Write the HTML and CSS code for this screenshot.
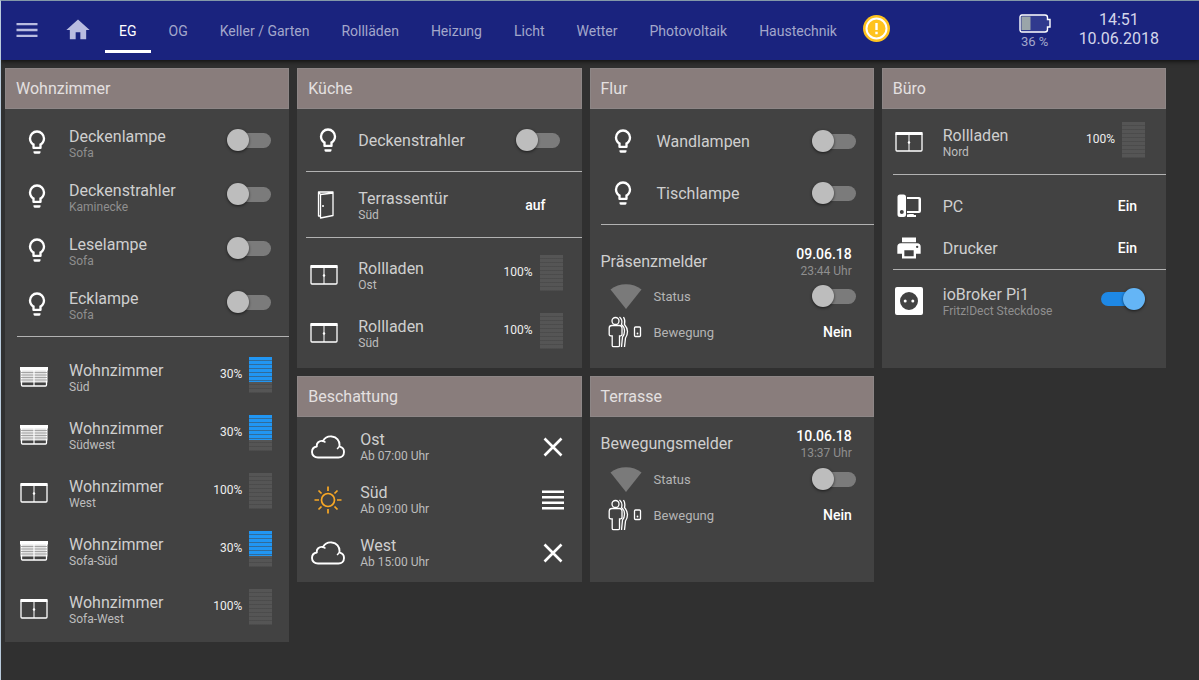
FILE: index.html
```html
<!DOCTYPE html>
<html lang="de">
<head>
  <meta charset="UTF-8">
  <meta name="viewport" content="width=device-width, initial-scale=1">
  <title>Haussteuerung - EG</title>
  <link rel="stylesheet" href="styles.css">
</head>
<body>
  <!-- Icons -->
  <svg class="sprite" aria-hidden="true">
    <symbol id="i-menu" viewBox="0 0 24 24"><path d="M3,6H21V8H3V6M3,11H21V13H3V11M3,16H21V18H3V16Z"/></symbol>
    <symbol id="i-home" viewBox="0 0 24 24"><path d="M10,20V14H14V20H19V12H22L12,3L2,12H5V20H10Z"/></symbol>
    <symbol id="i-bulb" viewBox="0 0 24 24"><path d="M12,2A7,7 0 0,1 19,9C19,11.38 17.81,13.47 16,14.74V17A1,1 0 0,1 15,18H9A1,1 0 0,1 8,17V14.74C6.19,13.47 5,11.38 5,9A7,7 0 0,1 12,2M9,21V20H15V21A1,1 0 0,1 14,22H10A1,1 0 0,1 9,21M12,4A5,5 0 0,0 7,9C7,11.05 8.23,12.81 10,13.58V16H14V13.58C15.77,12.81 17,11.05 17,9A5,5 0 0,0 12,4Z"/></symbol>
    <symbol id="i-printer" viewBox="0 0 24 24"><path d="M18,3H6V7H18M19,12A1,1 0 0,1 18,11A1,1 0 0,1 19,10A1,1 0 0,1 20,11A1,1 0 0,1 19,12M16,19H8V14H16M19,8H5A3,3 0 0,0 2,11V17H6V21H18V17H22V11A3,3 0 0,0 19,8Z"/></symbol>
    <symbol id="i-pc" viewBox="0 0 28 28">
      <path fill-rule="evenodd" d="M5 2.500H8.500A2.500 2.500 0 0 1 11 5V22.500A2.500 2.500 0 0 1 8.500 25H5A2.500 2.500 0 0 1 2.500 22.500V5A2.500 2.500 0 0 1 5 2.500ZM6.800 18A2 2 0 1 0 6.800 22A2 2 0 1 0 6.800 18Z"/>
      <path fill-rule="evenodd" d="M12 5H24A2 2 0 0 1 26 7V19A2 2 0 0 1 24 21H12V19H23.500V7H12Z"/>
      <path d="M12 22.500L15 22H18.500L19 23H21V25H12Z"/>
    </symbol>
    <symbol id="i-socket" viewBox="0 0 28 28"><path fill-rule="evenodd" d="M2 0H26A2 2 0 0 1 28 2V26A2 2 0 0 1 26 28H2A2 2 0 0 1 0 26V2A2 2 0 0 1 2 0ZM14 5A9 9 0 1 0 14 23A9 9 0 1 0 14 5Z"/><circle cx="10.200" cy="14" r="1.500"/><circle cx="17.800" cy="14" r="1.500"/></symbol>
    <symbol id="i-window" viewBox="0 0 28 20">
      <rect x="1" y="1" width="26" height="18" rx="1" fill="none" stroke="currentColor" stroke-width="1.300"/>
      <path d="M.500 0H27.500V3H.500ZM13.500 3H14.500V19H13.500Z"/><circle cx="14" cy="10.500" r="1.200"/>
    </symbol>
    <symbol id="i-shutter" viewBox="0 0 28 20">
      <rect x="1.500" y="1" width="25" height="18" rx="1" fill="none" stroke="currentColor" stroke-width="1.300"/>
      <path opacity=".85" d="M.500 3H27.500V15.500H.500Z"/>
      <path d="M0 0H28V3.500H0Z"/>
      <path fill="none" stroke="#777" stroke-width=".600" d="M1 5.500H27M1 8H27M1 10.500H27M1 13H27"/>
      <path d="M13.400 3H14.600V19H13.400Z"/>
    </symbol>
    <symbol id="i-door" viewBox="0 0 18 28">
      <path fill="none" stroke="currentColor" stroke-width="1.300" stroke-linejoin="round" d="M3.500 25H1.500V1H16V2M1.500 1L3.500 3.500V27L16 24.500V2L3.500 3.500M5 15H7"/>
    </symbol>
    <symbol id="i-cloud" viewBox="0 0 34 24">
      <path fill="none" stroke="currentColor" stroke-width="1.900" stroke-linejoin="round" d="M7 22.500C3.500 22.500 1 20.300 1 17C1 14 3 12 5.800 11.500C5.300 8.300 8 5.300 12 6C14 2.600 17.500 1 21 1.500C25.500 2 28.800 5.500 28.500 10.500C28.300 11.300 28.500 11.500 29 11.700C31.700 12.500 33 14.500 33 17C33 20.300 30.600 22.500 27.500 22.500Z"/>
      <path fill="none" stroke="currentColor" stroke-width="1.500" d="M11 6.200C12.600 6.100 13.500 6.600 14.500 7.400M28 11.500C27.500 12.500 27 13.300 26 14"/>
    </symbol>
    <symbol id="i-sun" viewBox="0 0 28 28">
      <g fill="none" stroke="currentColor" stroke-width="1.700">
        <circle cx="14" cy="14" r="6.500"/>
        <path d="M14 .500V5M14 23V27.500M.500 14H5M23 14H27.500M4.500 4.500L7.500 7.500M20.500 20.500L23.500 23.500M4.500 23.500L7.500 20.500M20.500 7.500L23.500 4.500"/>
      </g>
    </symbol>
    <symbol id="i-close" viewBox="0 0 24 24"><path fill="none" stroke="currentColor" stroke-width="2.600" d="M3.500 3.500L20.500 20.500M20.500 3.500L3.500 20.500"/></symbol>
    <symbol id="i-lines" viewBox="0 0 24 24"><path d="M1 2.500H23V5H1ZM1 8H23V10.500H1ZM1 13.500H23V16H1ZM1 19H23V21.500H1Z"/></symbol>
    <symbol id="i-signal" viewBox="0 0 32 25"><path d="M.500 5.500C9-1.500 23-1.500 31.500 5.500L16 25Z"/></symbol>
    <symbol id="i-motion" viewBox="0 0 34 32">
      <g fill="none" stroke="currentColor" stroke-width="1.300">
        <circle cx="7.500" cy="5" r="3.500"/>
        <path d="M4 9.500H11.500Q14 9.500 14 12V18.500Q14 20 11.500 20V29.500Q11.500 30.700 10 30.700H5.500Q4.200 30.700 4.200 29.500V20Q1.200 20 1.200 18.500V12Q1.200 9.500 4 9.500Z"/>
        <path d="M11.500 1Q15 4 13.500 8.500Q16.500 11 16.500 15Q16.500 19 14.500 21L13.500 31M15.500 1Q17.500 4 16.500 8.500Q19.500 12 19.500 15.500Q19.500 19 17.500 22L16.500 31"/>
        <rect x="26.500" y="11" width="6" height="9.500" rx="1"/>
      </g>
      <circle cx="29.500" cy="17.500" r=".9"/>
    </symbol>
  </svg>

  <header class="topbar">
    <button class="icon-btn" type="button" aria-label="Menü"><svg class="icon"><use href="#i-menu"/></svg></button>
    <a class="icon-btn" href="#home" aria-label="Start"><svg class="icon"><use href="#i-home"/></svg></a>
    <nav class="tabs">
      <a class="active" href="#eg">EG</a>
      <a href="#og">OG</a>
      <a href="#keller">Keller / Garten</a>
      <a href="#rolllaeden">Rollläden</a>
      <a href="#heizung">Heizung</a>
      <a href="#licht">Licht</a>
      <a href="#wetter">Wetter</a>
      <a href="#pv">Photovoltaik</a>
      <a href="#haustechnik">Haustechnik</a>
    </nav>
    <svg class="alert" viewBox="0 0 27 27" role="img" aria-label="Warnung">
      <circle cx="13.500" cy="13.500" r="13.500" fill="#ffc31f"/>
      <circle cx="13.500" cy="13.500" r="10" fill="none" stroke="#fff" stroke-width="2"/>
      <path fill="#fff" d="M12.300 8H14.700V15H12.300ZM12.300 16.800H14.700V19.200H12.300Z"/>
    </svg>
    <div class="battery">
      <svg width="32" height="19" viewBox="0 0 32 19">
        <path fill="#303a8e" stroke="#fff" stroke-width="1.400" d="M3 1H26Q28.500 1 28.500 3.500V5.500H31V13H28.500V15.500Q28.500 18 26 18H3Q1 18 1 15.500V3.500Q1 1 3 1Z"/>
        <path fill="#9aa5a9" d="M2.500 2.500H11.500V16H2.500Z"/>
      </svg>
      <span>36 %</span>
    </div>
    <div class="clock">
      <div>14:51</div>
      <div>10.06.2018</div>
    </div>
  </header>

  <main class="board">
    <div class="col">
      <section class="card">
        <h2>Wohnzimmer</h2>
        <div class="group lamps">
          <div class="row two">
            <svg class="icon"><use href="#i-bulb"/></svg>
            <label class="text" for="l1">Deckenlampe<small>Sofa</small></label>
            <input class="switch" type="checkbox" id="l1">
          </div>
          <div class="row two">
            <svg class="icon"><use href="#i-bulb"/></svg>
            <label class="text" for="l2">Deckenstrahler<small>Kaminecke</small></label>
            <input class="switch" type="checkbox" id="l2">
          </div>
          <div class="row two">
            <svg class="icon"><use href="#i-bulb"/></svg>
            <label class="text" for="l3">Leselampe<small>Sofa</small></label>
            <input class="switch" type="checkbox" id="l3">
          </div>
          <div class="row two">
            <svg class="icon"><use href="#i-bulb"/></svg>
            <label class="text" for="l4">Ecklampe<small>Sofa</small></label>
            <input class="switch" type="checkbox" id="l4">
          </div>
        </div>
        <hr>
        <div class="group blinds main">
          <div class="row">
            <svg class="icon win"><use href="#i-shutter"/></svg>
            <div class="text">Wohnzimmer<small>Süd</small></div>
            <div class="blind">30%<div class="bar"><i style="height:70%"></i></div></div>
          </div>
          <div class="row">
            <svg class="icon win"><use href="#i-shutter"/></svg>
            <div class="text">Wohnzimmer<small>Südwest</small></div>
            <div class="blind">30%<div class="bar"><i style="height:70%"></i></div></div>
          </div>
          <div class="row">
            <svg class="icon win"><use href="#i-window"/></svg>
            <div class="text">Wohnzimmer<small>West</small></div>
            <div class="blind">100%<div class="bar"></div></div>
          </div>
          <div class="row">
            <svg class="icon win"><use href="#i-shutter"/></svg>
            <div class="text">Wohnzimmer<small>Sofa-Süd</small></div>
            <div class="blind">30%<div class="bar"><i style="height:70%"></i></div></div>
          </div>
          <div class="row">
            <svg class="icon win"><use href="#i-window"/></svg>
            <div class="text">Wohnzimmer<small>Sofa-West</small></div>
            <div class="blind">100%<div class="bar"></div></div>
          </div>
        </div>
      </section>
    </div>

    <div class="col kitchen">
      <section class="card">
        <h2>Küche</h2>
        <div class="group">
          <div class="row tall">
            <svg class="icon"><use href="#i-bulb"/></svg>
            <label class="text" for="l5">Deckenstrahler</label>
            <input class="switch" type="checkbox" id="l5">
          </div>
        </div>
        <hr>
        <div class="group contact">
          <div class="row tall">
            <svg class="icon door"><use href="#i-door"/></svg>
            <div class="text">Terrassentür<small>Süd</small></div>
            <b class="value">auf</b>
          </div>
        </div>
        <hr>
        <div class="group blinds">
          <div class="row">
            <svg class="icon win"><use href="#i-window"/></svg>
            <div class="text">Rollladen<small>Ost</small></div>
            <div class="blind">100%<div class="bar"></div></div>
          </div>
          <div class="row">
            <svg class="icon win"><use href="#i-window"/></svg>
            <div class="text">Rollladen<small>Süd</small></div>
            <div class="blind">100%<div class="bar"></div></div>
          </div>
        </div>
      </section>

      <section class="card">
        <h2>Beschattung</h2>
        <div class="group shade">
          <div class="row">
            <svg class="icon cloud"><use href="#i-cloud"/></svg>
            <div class="text">Ost<small>Ab 07:00 Uhr</small></div>
            <svg class="mark"><use href="#i-close"/></svg>
          </div>
          <div class="row">
            <svg class="icon sun"><use href="#i-sun"/></svg>
            <div class="text">Süd<small>Ab 09:00 Uhr</small></div>
            <svg class="mark"><use href="#i-lines"/></svg>
          </div>
          <div class="row">
            <svg class="icon cloud"><use href="#i-cloud"/></svg>
            <div class="text">West<small>Ab 15:00 Uhr</small></div>
            <svg class="mark"><use href="#i-close"/></svg>
          </div>
        </div>
      </section>
    </div>

    <div class="col hall">
      <section class="card">
        <h2>Flur</h2>
        <div class="group lamps">
          <div class="row">
            <svg class="icon"><use href="#i-bulb"/></svg>
            <label class="text" for="l6">Wandlampen</label>
            <input class="switch" type="checkbox" id="l6">
          </div>
          <div class="row">
            <svg class="icon"><use href="#i-bulb"/></svg>
            <label class="text" for="l7">Tischlampe</label>
            <input class="switch" type="checkbox" id="l7">
          </div>
        </div>
        <hr>
        <div class="group sensor spaced">
          <div class="head">
            <span>Präsenzmelder</span>
            <div class="when"><b>09.06.18</b><small>23:44 Uhr</small></div>
          </div>
          <div class="row">
            <svg class="icon signal"><use href="#i-signal"/></svg>
            <label class="text" for="s1">Status</label>
            <input class="switch" type="checkbox" id="s1">
          </div>
          <div class="row">
            <svg class="icon motion"><use href="#i-motion"/></svg>
            <div class="text">Bewegung</div>
            <b class="value">Nein</b>
          </div>
        </div>
      </section>

      <section class="card">
        <h2>Terrasse</h2>
        <div class="group sensor">
          <div class="head">
            <span>Bewegungsmelder</span>
            <div class="when"><b>10.06.18</b><small>13:37 Uhr</small></div>
          </div>
          <div class="row">
            <svg class="icon signal"><use href="#i-signal"/></svg>
            <label class="text" for="s2">Status</label>
            <input class="switch" type="checkbox" id="s2">
          </div>
          <div class="row">
            <svg class="icon motion"><use href="#i-motion"/></svg>
            <div class="text">Bewegung</div>
            <b class="value">Nein</b>
          </div>
        </div>
      </section>
    </div>

    <div class="col office">
      <section class="card">
        <h2>Büro</h2>
        <div class="group contact">
          <div class="row tall">
            <svg class="icon win"><use href="#i-window"/></svg>
            <div class="text">Rollladen<small>Nord</small></div>
            <div class="blind">100%<div class="bar"></div></div>
          </div>
        </div>
        <hr>
        <div class="group devices">
          <div class="row">
            <svg class="icon"><use href="#i-pc"/></svg>
            <div class="text">PC</div>
            <b class="value">Ein</b>
          </div>
          <div class="row">
            <svg class="icon"><use href="#i-printer"/></svg>
            <div class="text">Drucker</div>
            <b class="value">Ein</b>
          </div>
        </div>
        <hr>
        <div class="group dim">
          <div class="row tall two">
            <svg class="icon"><use href="#i-socket"/></svg>
            <label class="text" for="d1">ioBroker Pi1<small>Fritz!Dect Steckdose</small></label>
            <input class="switch" type="checkbox" id="d1" checked>
          </div>
        </div>
      </section>
    </div>
  </main>
</body>
</html>
```
FILE: styles.css
```css
:root {
  --blue: #2196f3;
  --bar: #1a237e;
  --card: #424242;
  --head: #897d7c;
}
* {
  box-sizing: border-box;
}
body {
  margin: 0;
  min-height: 100vh;
  background: #303030;
  border-left: 1px solid #b9cbdc;
  border-top: 1px solid #8398a8;
  color: #cfcfcf;
  font-family: Roboto, sans-serif;
  font-size: 16px;
  line-height: 19px;
}
.sprite {
  display: none;
}
.icon,
.mark {
  flex: none;
  width: 28px;
  height: 28px;
  fill: currentColor;
  color: #fff;
}

/* Top bar */
.topbar {
  display: flex;
  align-items: center;
  min-height: 59px;
  padding: 0 40px 0 12px;
  background: var(--bar);
  box-shadow: 0 1px 5px rgba(0, 0, 0, 0.8);
}
.icon-btn {
  display: flex;
  margin: 0 23px 2px 0;
  padding: 0;
  border: 0;
  background: none;
}
a.icon-btn {
  margin-right: 13px;
}
.icon-btn .icon {
  color: #b9bce0;
}
.tabs {
  display: flex;
  gap: 4px;
  margin-top: 4px;
}
.tabs a {
  padding: 0 14px;
  border-bottom: 3px solid transparent;
  color: #a3a7cb;
  font-size: 14px;
  line-height: 38px;
  text-decoration: none;
  white-space: nowrap;
}
.tabs .active {
  color: #fff;
  border-color: #fff;
}
.alert {
  flex: none;
  width: 27px;
  height: 27px;
  margin: 0 0 4px 12px;
}
.battery {
  display: flex;
  flex-direction: column;
  align-items: center;
  gap: 1px;
  margin-top: 2px;
  margin-left: auto;
  color: #a3a7cb;
  font-size: 13px;
  line-height: 16px;
}
.clock {
  margin: 0 0 4px 28px;
  color: #d3d5ea;
  text-align: center;
}

/* Board */
.board {
  display: grid;
  grid-template-columns: repeat(4, 1fr);
  gap: 8px;
  padding: 8px 33px 8px 4px;
}
.col {
  --inset: 12px;
  --icon: 64px;
  --right: 18px;
  display: flex;
  flex-direction: column;
  gap: 8px;
}
.kitchen {
  --inset: 9px;
  --icon: 61px;
  --right: 22px;
}
.hall {
  --inset: 11px;
  --icon: 67px;
}
.office {
  --inset: 11px;
  --icon: 61px;
  --right: 21px;
}
.card {
  background: var(--card);
}
.kitchen .card:first-child,
.hall .card:first-child,
.office .card {
  min-height: 300px;
}
.kitchen .card:last-child,
.hall .card:last-child {
  min-height: 206px;
}
.card h2 {
  margin: 0;
  padding: 10px;
  border: 1px solid #8d8686;
  background: var(--head);
  color: #e4e0e0;
  font-size: 16px;
  font-weight: 400;
}
hr {
  height: 1px;
  margin: 0 0 0 var(--inset);
  border: 0;
  background: #b2b2b2;
}

/* Rows */
.row {
  display: grid;
  grid-template-columns: var(--icon) 1fr auto;
  align-items: center;
  min-height: 58px;
  padding-right: var(--right);
}
.row .icon {
  justify-self: center;
}
.office .icon {
  margin-right: 6px;
}
.row .win {
  width: 28px;
  height: 20px;
  margin-right: 7px;
}
.row .door {
  width: 18px;
  height: 28px;
  margin-right: 4px;
}
.row .cloud {
  width: 34px;
  height: 24px;
}
.row .sun {
  color: #f9a825;
}
.row .signal {
  width: 32px;
  height: 25px;
  color: #7a7a7a;
}
.row .motion {
  width: 34px;
  height: 32px;
}
.row.tall {
  min-height: 62px;
}
.mark {
  width: 24px;
  height: 24px;
}
.text small {
  display: block;
  color: #bdbdbd;
  font-size: 12px;
  line-height: 14px;
}
.lamps small,
.dim small {
  color: #8f8f8f;
}
.lamps {
  padding: 6px 0 5px;
}
.lamps .row {
  min-height: 52px;
}
.lamps .two {
  min-height: 54px;
}
.lamps .two .text {
  padding-top: 2px;
}
.contact {
  padding: 2px 0 1px;
}
.blinds {
  padding: 8px 0 6px;
}
.blinds.main {
  padding: 11px 0 4px;
}
.blinds .row {
  padding-right: 17px;
}
.kitchen .blinds .row {
  padding-right: 19px;
}
.shade {
  padding: 3px 0;
}
.shade .row {
  min-height: 53px;
  padding-right: 17px;
}
.shade .text {
  padding-left: 2px;
}
.devices {
  padding: 10px 0 0;
}
.devices .row {
  min-height: 42px;
}
.value {
  color: #fff;
  font-size: 14px;
  font-weight: 500;
}
.kitchen .value {
  padding-right: 14px;
}
.office .value {
  padding-right: 8px;
}
.hall .value {
  padding-right: 4px;
}

/* Motion sensors */
.sensor {
  padding-top: 8px;
}
.sensor.spaced {
  padding-top: 20px;
}
.sensor .head {
  display: flex;
  justify-content: space-between;
  align-items: center;
  padding: 0 22px 0 11px;
  min-height: 36px;
}
.spaced .head {
  min-height: 33px;
}
.sensor .row {
  min-height: 36px;
  grid-template-columns: 64px 1fr auto;
}
.sensor .text {
  color: #b4b4b4;
  font-size: 13px;
}
.sensor .icon {
  justify-self: end;
  margin-right: 12px;
}
.when {
  text-align: right;
}
.when b {
  display: block;
  color: #fff;
  font-size: 14px;
  font-weight: 500;
}
.when small {
  display: block;
  color: #8f8f8f;
  font-size: 12px;
  line-height: 14px;
}

/* Blind level */
.blind {
  display: flex;
  align-items: center;
  gap: 7px;
  margin-bottom: 5px;
  color: #eee;
  font-size: 12px;
}
.bar {
  position: relative;
  width: 23px;
  height: 36px;
  background: #555;
}
.bar i {
  display: block;
  background: var(--blue);
}
.bar::after {
  content: "";
  position: absolute;
  inset: 0;
  background: repeating-linear-gradient(transparent 0 3px, rgba(66, 66, 66, 0.5) 3px 4px);
}

/* Switch */
.switch {
  appearance: none;
  position: relative;
  width: 44px;
  height: 22px;
  margin: 0;
  cursor: pointer;
}
.two .switch {
  margin-bottom: 5px;
}
.switch::before {
  content: "";
  position: absolute;
  inset: 4px 0 3px 4px;
  border-radius: 8px;
  background: #7b7b7b;
}
.switch::after {
  content: "";
  position: absolute;
  top: 0;
  left: 0;
  width: 22px;
  height: 22px;
  border-radius: 50%;
  background: #bdbdbd;
  box-shadow: 0 1px 3px rgba(0, 0, 0, 0.6);
}
.switch:checked::before {
  inset: 4px 4px 4px 0;
  background: #1e88e5;
}
.switch:checked::after {
  left: 22px;
  background: #64b5f6;
}
```
